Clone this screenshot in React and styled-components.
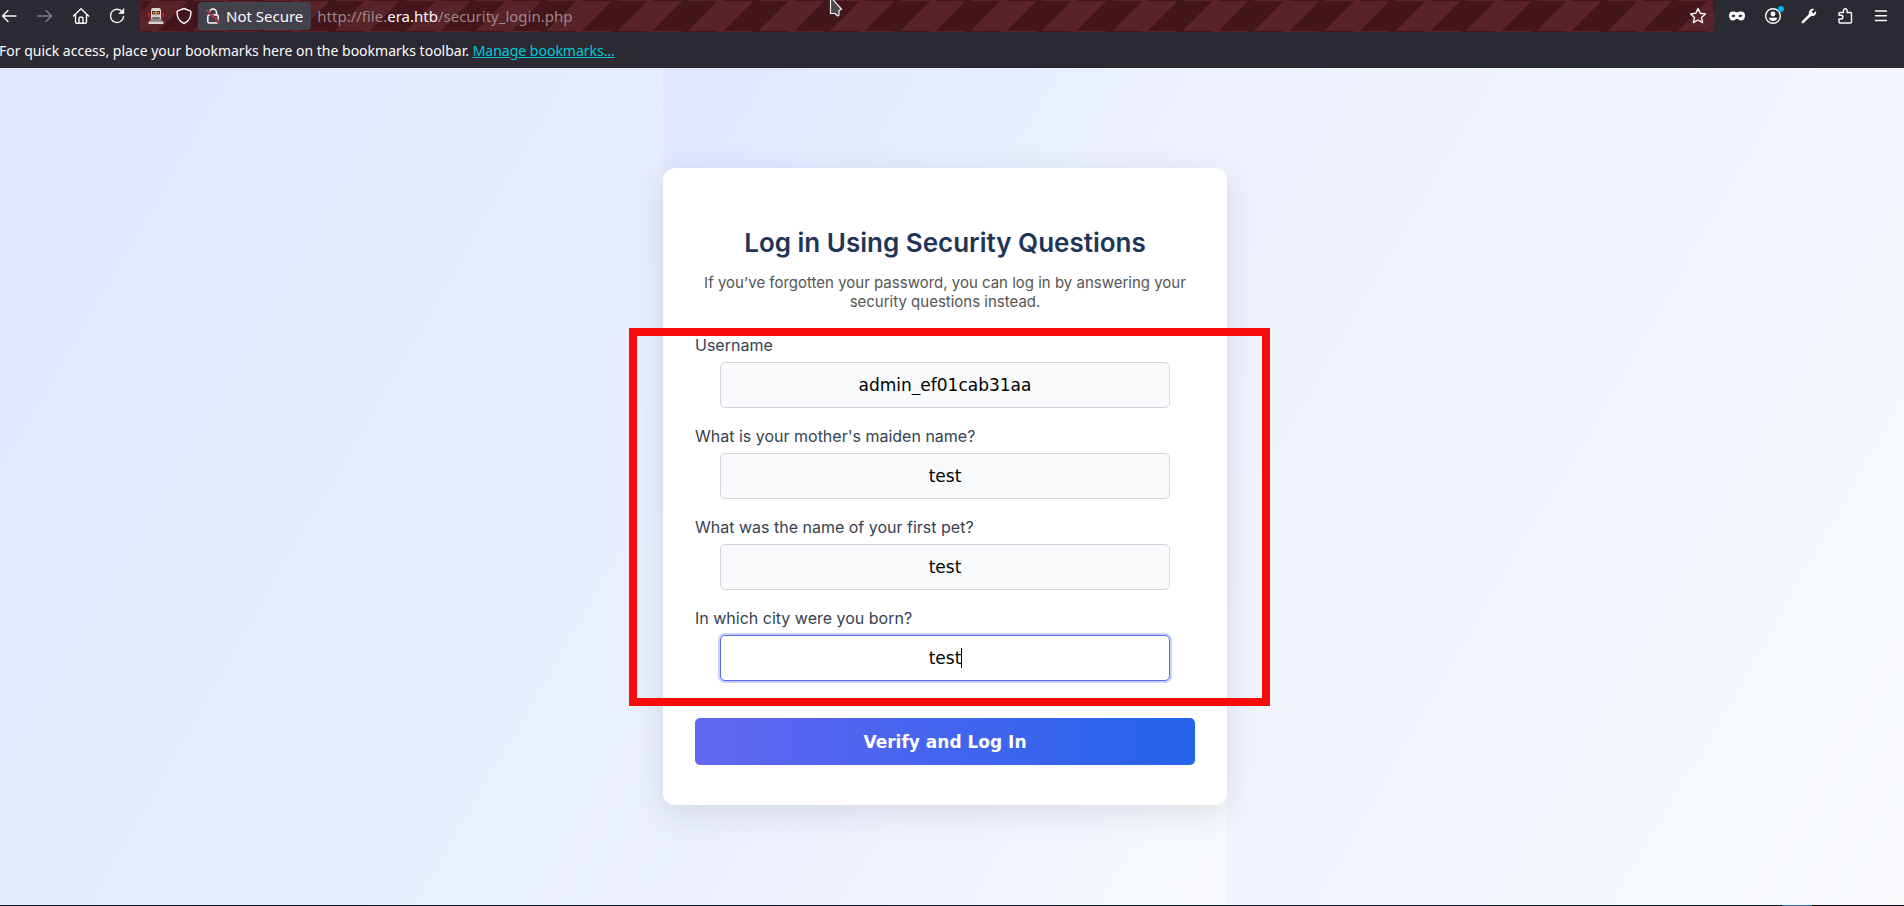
import React from 'react'
import styled, { createGlobalStyle, css } from 'styled-components'

const GlobalStyle = createGlobalStyle`
    * {
        box-sizing: border-box;
    }
    body {
        margin: 0;
        overflow: hidden;
        background: #2b2a33;
    }
`

/* the window sits a little past the left edge of the screen */
const WindowStyled = styled.div`
    display: flex;
    flex-direction: column;
    min-height: 100vh;
    margin-left: -14px;
`

const NavBar = styled.nav`
    display: flex;
    align-items: center;
    height: 32px;
    padding: 0 14px 0 12px;
    color: #fbfbfe;
    font: 15px/20px 'Noto Sans', sans-serif;
`

const NavGroup = styled.div`
    display: flex;
    gap: ${props => props.$gap};
    padding: ${props => props.$padding};
`

const IconButton = styled.button`
    position: relative;
    display: flex;
    padding: 0;
    border: 0;
    background: none;
    color: inherit;
    opacity: ${props => (props.disabled ? 0.4 : 1)};
    svg {
        display: block;
        width: 18px;
        height: 18px;
    }
`

const NoticeDot = styled.span`
    position: absolute;
    top: -1px;
    right: -2px;
    width: 6px;
    height: 6px;
    border-radius: 50%;
    background: #00b3f4;
`

const UrlBar = styled.div`
    display: flex;
    flex: 1;
    align-items: center;
    height: 32px;
    padding: 0 6px;
    border: 1px solid transparent;
    border-radius: 4px;
    background: repeating-linear-gradient(135deg, #42161a 0 8px, #58242a 8px 33px, #42161a 33px 50px);
`

const SecurityLabel = styled.button`
    display: flex;
    align-items: center;
    gap: 6px;
    height: 28px;
    margin-left: 5px;
    padding: 0 8px;
    border: 0;
    border-radius: 4px;
    background: #42414d;
    color: #fbfbfe;
    font: inherit;
    svg {
        display: block;
        width: 14px;
        height: 16px;
    }
`

const Address = styled.div`
    flex: 1;
    margin-left: 6px;
    color: #a08386;
    strong {
        color: #fbfbfe;
        font-weight: 400;
    }
`

const BookmarksBar = styled.div`
    height: 36px;
    padding: 9px 13px;
    color: #fbfbfe;
    font: 14px/20px 'Noto Sans', sans-serif;
    white-space: nowrap;
    a {
        color: #00c8d7;
    }
`

const pageGradient = css`
    background: linear-gradient(120deg, #e0e7ff 0%, #f8fafc 100%);
`

const PageStyled = styled.div`
    display: flex;
    flex: 1;
    justify-content: center;
    ${pageGradient}
`

const Column = styled.main`
    display: flex;
    flex-direction: column;
    justify-content: center;
    width: 100%;
    max-width: 564px;
    ${pageGradient}
`

const Card = styled.form`
    position: relative;
    display: flex;
    flex-direction: column;
    padding: 57px 32px 40px;
    border-radius: 12px;
    background: #fff;
    box-shadow: 0 8px 32px rgba(30, 41, 59, 0.12);
    font-family: Inter, sans-serif;
`

const Title = styled.h2`
    margin: 0 0 12px;
    color: #1e3557;
    font-size: 26px;
    font-weight: 600;
    line-height: 36px;
    text-align: center;
`

const Intro = styled.p`
    margin: 0 0 25px;
    color: #555;
    font-size: 15px;
    line-height: 19px;
    text-align: center;
`

const Questions = styled.div`
    display: flex;
    flex-direction: column;
    gap: 19px;
    margin-bottom: 37px;
`

const Field = styled.div`
    display: flex;
    flex-direction: column;
    gap: 7px;
    label {
        color: #374151;
        font-size: 16px;
        line-height: 19px;
    }
`

const InputWrap = styled.div`
    position: relative;
    width: 90%;
    margin: 0 auto;
`

const TextInput = styled.input`
    display: block;
    width: 100%;
    height: 46px;
    padding: 0 12px;
    border: 1px solid ${props => (props.$active ? '#6366f1' : '#d1d5db')};
    border-radius: 5px;
    outline: none;
    background: ${props => (props.$active ? '#fff' : '#f9fafb')};
    box-shadow: ${props => (props.$active ? '0 0 0 2px #c7d2fe' : 'none')};
    color: #000;
    font: 17px 'DejaVu Sans', sans-serif;
    text-align: center;
`

/* text caret, kept steady instead of blinking */
const Caret = styled.span`
    position: absolute;
    top: 13px;
    left: calc(50% + 16px);
    width: 1px;
    height: 20px;
    background: #000;
`

const SubmitButton = styled.button`
    height: 47px;
    border: 0;
    border-radius: 5px;
    background: linear-gradient(90deg, #6366f1 0%, #2563eb 100%);
    color: #fff;
    font: bold 17px 'DejaVu Sans', sans-serif;
`

/* marker frame drawn over the questions */
const Highlight = styled.div`
    position: absolute;
    top: 160px;
    right: -43px;
    bottom: 99px;
    left: -34px;
    border: 8px solid #f80b0b;
    pointer-events: none;
`

const BottomEdge = styled.footer`
    display: flex;
    justify-content: flex-end;
    height: 1px;
    background: #131c2e;
    &::before {
        content: '';
        width: 30px;
        background: #3d68a8;
    }
    &::after {
        content: '';
        width: 92px;
        background: #0c0c10;
    }
`

const Pointer = styled.svg`
    position: absolute;
    top: 0;
    left: 829px;
    width: 16px;
    height: 18px;
`

const Icon = ({ children }) => (
    <svg viewBox='0 0 18 18' fill='none' stroke='currentColor' strokeWidth='1.4' strokeLinecap='round' strokeLinejoin='round' aria-hidden='true'>
        {children}
    </svg>
)

const BackIcon = () => <Icon><path d='M16 9H2.500M8 3.500L2.500 9L8 14.500' /></Icon>

const ForwardIcon = () => <Icon><path d='M2 9H15.500M10 3.500L15.500 9L10 14.500' /></Icon>

const HomeIcon = () => (
    <Icon>
        <path d='M1.500 9L9 1.800L16.500 9M3.500 7.500V15Q3.500 16.200 4.700 16.200H13.300Q14.500 16.200 14.500 15V7.500' />
        <path d='M7 16V11.500Q7 10.300 8 10.300H10Q11 10.300 11 11.500V16' />
    </Icon>
)

const ReloadIcon = () => (
    <Icon>
        <path d='M14.600 5.300A6.600 6.600 0 1 0 15.600 9.500' />
        <path d='M15.800 2V6.500H11.300Z' fill='currentColor' strokeWidth='0.8' />
    </Icon>
)

const RobotIcon = () => (
    <svg viewBox='0 0 18 18' aria-hidden='true'>
        <path d='M1 5.500h2v5h-2zM15 5.500h2v5h-2z' fill='#c4161c' />
        <path d='M4 2.500L5.500 1H12.500L14 2.500V12.500H4z' fill='#d8d4d0' />
        <path d='M5 4h3.500v3.500h-3.500zM9.500 4h3.500v3.500h-3.500z' fill='#5b2a12' />
        <path d='M6 5h1.500v1.500h-1.500zM10.500 5h1.500v1.500h-1.500z' fill='#ff9a1f' />
        <path d='M8.500 7.500h1v1.500h-1z' fill='#8c8a88' />
        <path d='M5.500 10h7v2h-7z' fill='#3a3638' />
        <path d='M6.500 10.500h1v1h-1zM8.500 10.500h1v1h-1zM10.500 10.500h1v1h-1z' fill='#fff' />
        <path d='M3 12.500h12v2h-12z' fill='#8c8a88' />
        <path d='M1.500 14.500h15v2.500h-15z' fill='#d8d4d0' />
    </svg>
)

const ShieldIcon = () => (
    <Icon><path d='M9 1.500L15.200 3.900Q16 4.200 16 5C16 10.500 13.500 14.500 9 16.500C4.500 14.500 2 10.500 2 5Q2 4.200 2.800 3.900Z' /></Icon>
)

const LockIcon = () => (
    <svg viewBox='0 0 14 16' fill='none' aria-hidden='true'>
        <path d='M3.500 7V4.500A3.500 3.500 0 0 1 10.500 4.500V7' stroke='#fbfbfe' strokeWidth='1.500' />
        <rect x='1.800' y='7' width='10.400' height='8' rx='1.500' stroke='#fbfbfe' strokeWidth='1.500' />
        <path d='M0 1.500L13.500 15' stroke='#42414d' strokeWidth='3' />
        <path d='M0.500 2L13.500 15' stroke='#e22850' strokeWidth='1.400' />
    </svg>
)

const StarIcon = () => (
    <Icon><path d='M9 1.500L11.200 6.300L16.400 6.900L12.500 10.400L13.600 15.700L9 13L4.400 15.700L5.500 10.400L1.600 6.900L6.800 6.300Z' /></Icon>
)

const MaskIcon = () => (
    <Icon>
        <path
            d='M5 4.500C7 4.500 7.800 5.300 9 5.300C10.200 5.300 11 4.500 13 4.500C16 4.500 17 6.500 17 8.500C17 11.500 15.500 13.500 13 13.500C10.800 13.500 10.200 11.800 9 11.800C7.800 11.800 7.200 13.500 5 13.500C2.500 13.500 1 11.500 1 8.500C1 6.500 2 4.500 5 4.500ZM3.500 9C4.300 10.600 6.700 10.600 7.500 9C6.700 7.400 4.300 7.400 3.500 9ZM10.500 9C11.300 10.600 13.700 10.600 14.500 9C13.700 7.400 11.300 7.400 10.500 9Z'
            fill='currentColor'
            fillRule='evenodd'
            stroke='none'
        />
    </Icon>
)

const AccountIcon = () => (
    <Icon>
        <circle cx='9' cy='9' r='7.300' />
        <circle cx='9' cy='7' r='2.400' fill='currentColor' stroke='none' />
        <path d='M4.800 10.700H13.200C12.800 13 11.300 14 9 14C6.700 14 5.200 13 4.800 10.700Z' fill='currentColor' stroke='none' />
    </Icon>
)

const WrenchIcon = () => (
    <Icon>
        <path d='M2.800 15.200L9.500 8.500' strokeWidth='2.600' />
        <path d='M14.200 2C11.500 1.200 8.600 3.200 9 6.300L8 8.500L9.500 10L11.700 9C14.800 9.500 16.800 6.500 16 3.900L13.400 6.500L11.500 4.700Z' fill='currentColor' stroke='none' />
    </Icon>
)

const PuzzleIcon = () => (
    <Icon><path d='M3 8V6.500Q3 5.500 4 5.500H7.500V3.500A1.800 1.800 0 0 1 11.100 3.500V5.500H14.500Q15.500 5.500 15.500 6.500V15Q15.500 16 14.500 16H4Q3 16 3 15V12H5A1.900 1.900 0 0 0 5 8.200H3Z' /></Icon>
)

const MenuIcon = () => <Icon><path d='M3.500 4H14.500M3.500 8.800H14.500M3.500 13.500H14.500' /></Icon>

const BrowserBar = () => {
    return (
        <header>
            <NavBar>
                <NavGroup $gap='18px' $padding='0 14px 0 2px'>
                    <IconButton aria-label='Back'><BackIcon /></IconButton>
                    <IconButton aria-label='Forward' disabled><ForwardIcon /></IconButton>
                    <IconButton aria-label='Home'><HomeIcon /></IconButton>
                    <IconButton aria-label='Reload'><ReloadIcon /></IconButton>
                </NavGroup>
                <UrlBar>
                    <NavGroup $gap='10px' $padding='0'>
                        <IconButton aria-label='Remote control'><RobotIcon /></IconButton>
                        <IconButton aria-label='Tracking protection'><ShieldIcon /></IconButton>
                    </NavGroup>
                    <SecurityLabel><LockIcon />Not Secure</SecurityLabel>
                    <Address>http://file.<strong>era.htb</strong>/security_login.php</Address>
                    <IconButton aria-label='Bookmark this page'><StarIcon /></IconButton>
                </UrlBar>
                <NavGroup $gap='18px' $padding='0 0 0 14px'>
                    <IconButton aria-label='Private'><MaskIcon /></IconButton>
                    <IconButton aria-label='Account'><AccountIcon /><NoticeDot /></IconButton>
                    <IconButton aria-label='Tools'><WrenchIcon /></IconButton>
                    <IconButton aria-label='Extensions'><PuzzleIcon /></IconButton>
                    <IconButton aria-label='Menu'><MenuIcon /></IconButton>
                </NavGroup>
            </NavBar>
            <BookmarksBar>
                For quick access, place your bookmarks here on the bookmarks toolbar. <a href='#bookmarks'>Manage bookmarks…</a>
            </BookmarksBar>
        </header>
    )
}

const questions = [
    { id: 'username', label: 'Username', value: 'admin_ef01cab31aa' },
    { id: 'mother', label: "What is your mother's maiden name?", value: 'test' },
    { id: 'pet', label: 'What was the name of your first pet?', value: 'test' },
    { id: 'city', label: 'In which city were you born?', value: 'test', active: true },
]

const LoginForm = () => {
    return (
        <Card onSubmit={e => e.preventDefault()}>
            <Title>Log in Using Security Questions</Title>
            <Intro>If you’ve forgotten your password, you can log in by answering your security questions instead.</Intro>
            <Questions>
                {questions.map(({ id, label, value, active }) => (
                    <Field key={id}>
                        <label htmlFor={id}>{label}</label>
                        <InputWrap>
                            <TextInput id={id} name={id} type='text' defaultValue={value} $active={active} />
                            {active && <Caret />}
                        </InputWrap>
                    </Field>
                ))}
            </Questions>
            <SubmitButton type='submit'>Verify and Log In</SubmitButton>
            <Highlight />
        </Card>
    )
}

const App = () => {
    return (
        <>
            <GlobalStyle />
            <WindowStyled>
                <BrowserBar />
                <PageStyled>
                    <Column>
                        <LoginForm />
                    </Column>
                </PageStyled>
                <BottomEdge />
            </WindowStyled>
            <Pointer viewBox='0 0 16 18' aria-hidden='true'>
                <path d='M1.500 -3V13.500H6L8.500 16L10 15V10.500L12.500 9Z' fill='#4a4a4a' stroke='#f4f4f4' strokeWidth='1.200' />
            </Pointer>
        </>
    )
}

export default App
